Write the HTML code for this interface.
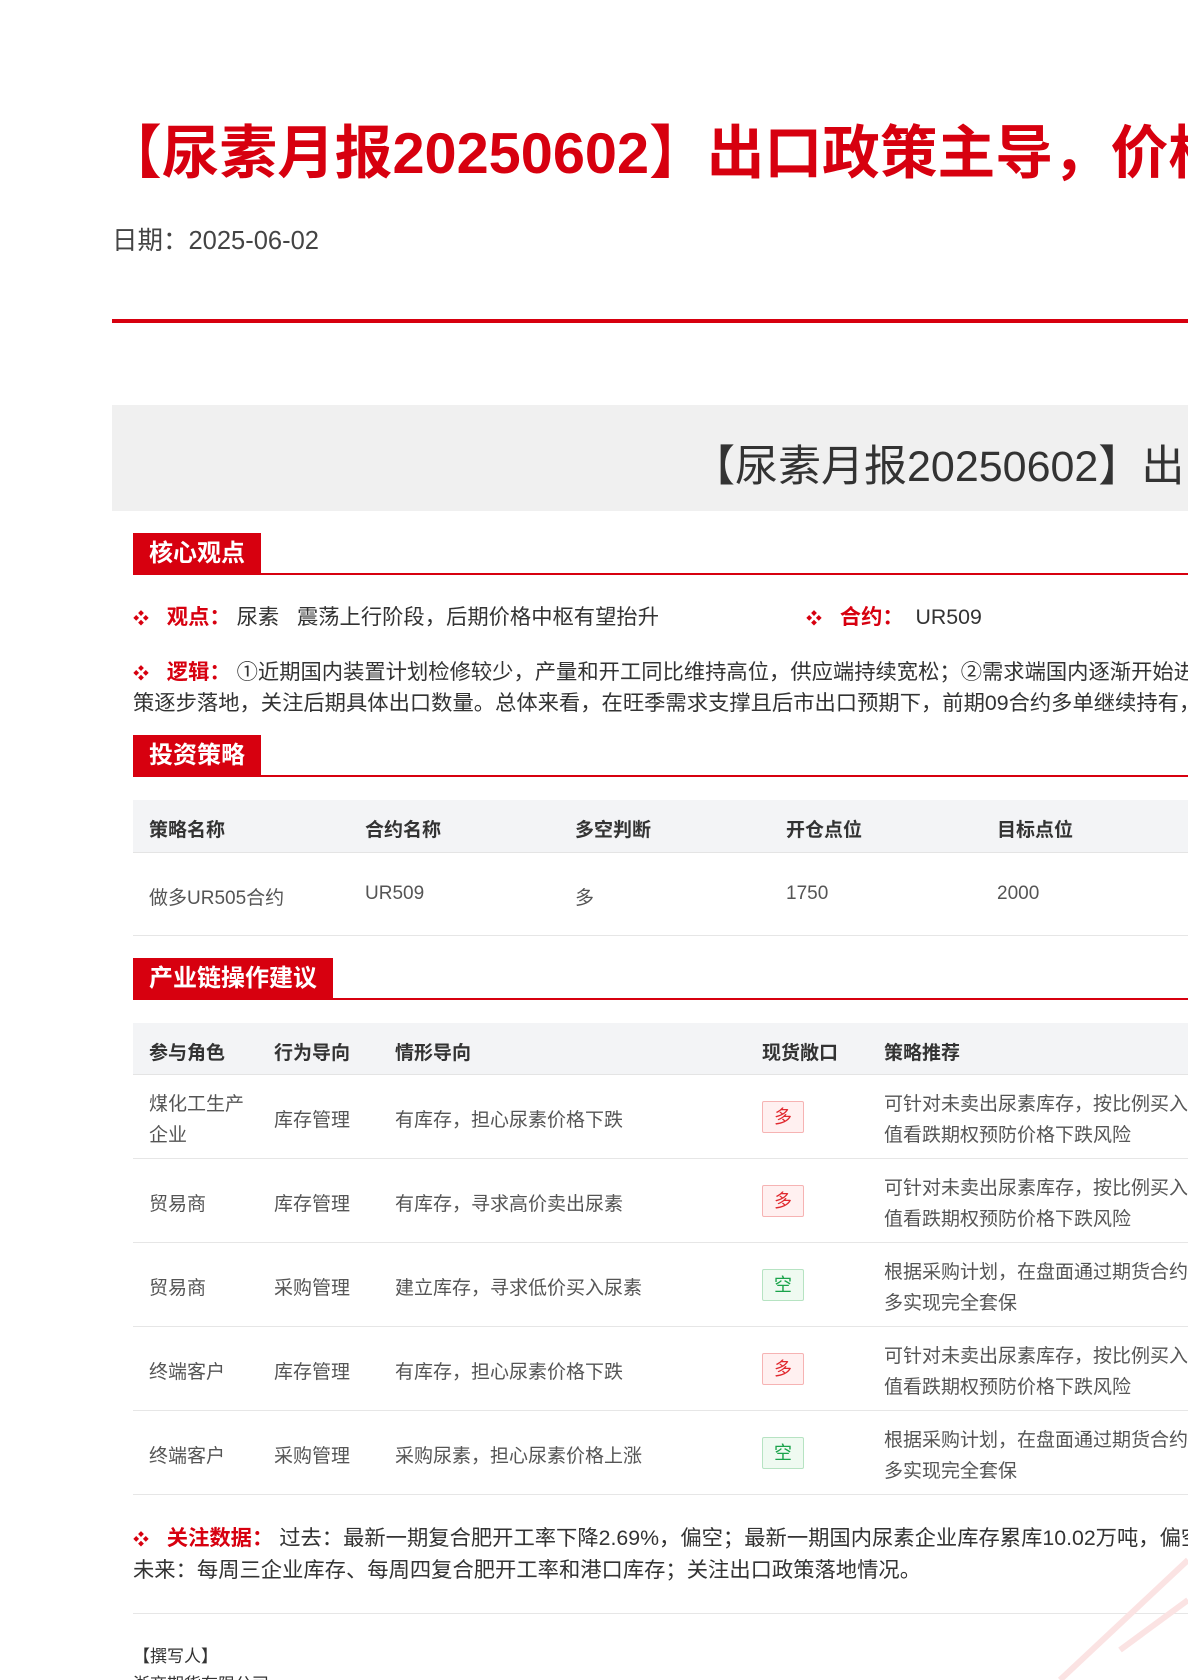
<!DOCTYPE html>
<html><head><meta charset="utf-8">
<style>
html,body{margin:0;padding:0;width:1188px;height:1680px;overflow:hidden;background:#fff;font-family:"Liberation Sans","Noto Sans CJK SC",sans-serif;}
#w{position:relative;width:1188px;height:1680px;overflow:hidden;}
.a{position:absolute;white-space:nowrap;}
.sec{position:absolute;left:133px;background:#d7000f;color:#fff;font-size:24px;font-weight:bold;height:42px;line-height:42px;padding:0 16px;}
.secl{position:absolute;left:133px;right:0;height:2px;background:#d7000f;}
.th{position:absolute;left:133px;right:0;background:#f3f4f6;border-bottom:1px solid #e4e4e4;}
.row{position:absolute;left:133px;right:0;border-bottom:1px solid #e6e6e6;}
.hd{font-size:19px;font-weight:bold;color:#333;}
.td{font-size:19px;color:#555;}
.b{position:absolute;width:40px;height:30px;line-height:30px;text-align:center;font-size:18px;border-radius:2px;}
.up{color:#e0282e;background:#fff0f0;border:1px solid #f6b3b3;}
.dn{color:#1aa34a;background:#effaf1;border:1px solid #b6e3c2;}
.bul{color:#d7000f;font-size:16px;}
.red{color:#d7000f;font-weight:bold;}
.t{font-size:21.3px;color:#333;}
</style></head><body><div id="w">
<div class="a" style="left:104px;top:106px;font-size:57.7px;font-weight:bold;color:#d7000f;">【尿素月报20250602】出口政策主导，价格震荡上行</div>
<div class="a" style="left:112px;top:220px;font-size:25.5px;color:#444;">日期：2025-06-02</div>
<div class="a" style="left:112px;top:319px;right:0;height:4px;background:#d7000f;"></div>
<div class="a" style="left:112px;top:405px;right:0;height:106px;background:#f0f0f0;"></div>
<div class="a" style="left:692px;top:432px;font-size:43px;color:#333;">【尿素月报20250602】出口政策主导</div>

<div class="sec" style="top:533px;">核心观点</div><div class="secl" style="top:573px;"></div>
<div class="a t" style="left:133px;top:600px;"><span class="bul">❖</span>&nbsp;&nbsp;&nbsp;<span class="red">观点：</span>&nbsp;尿素&nbsp;&nbsp;&nbsp;震荡上行阶段，后期价格中枢有望抬升</div>
<div class="a t" style="left:806px;top:600px;"><span class="bul">❖</span>&nbsp;&nbsp;&nbsp;<span class="red">合约：</span>&nbsp;&nbsp;UR509</div>
<div class="a t" style="left:133px;top:655px;"><span class="bul">❖</span>&nbsp;&nbsp;&nbsp;<span class="red">逻辑：</span>&nbsp;①近期国内装置计划检修较少，产量和开工同比维持高位，供应端持续宽松；②需求端国内逐渐开始进入旺季</div>
<div class="a t" style="left:133px;top:686px;">策逐步落地，关注后期具体出口数量。总体来看，在旺季需求支撑且后市出口预期下，前期09合约多单继续持有，</div>

<div class="sec" style="top:735px;">投资策略</div><div class="secl" style="top:775px;"></div>
<div class="th" style="top:800px;height:52px;"></div>
<div class="a hd" style="left:149px;top:815px;">策略名称</div>
<div class="a hd" style="left:365px;top:815px;">合约名称</div>
<div class="a hd" style="left:575px;top:815px;">多空判断</div>
<div class="a hd" style="left:786px;top:815px;">开仓点位</div>
<div class="a hd" style="left:997px;top:815px;">目标点位</div>
<div class="row" style="top:853px;height:82px;"></div>
<div class="a td" style="left:149px;top:883px;">做多UR505合约</div>
<div class="a td" style="left:365px;top:883px;">UR509</div>
<div class="a td" style="left:575px;top:883px;">多</div>
<div class="a td" style="left:786px;top:883px;">1750</div>
<div class="a td" style="left:997px;top:883px;">2000</div>

<div class="sec" style="top:958px;">产业链操作建议</div><div class="secl" style="top:998px;"></div>
<div class="th" style="top:1023px;height:51px;"></div>
<div class="a hd" style="left:149px;top:1038px;">参与角色</div>
<div class="a hd" style="left:274px;top:1038px;">行为导向</div>
<div class="a hd" style="left:395px;top:1038px;">情形导向</div>
<div class="a hd" style="left:762px;top:1038px;">现货敞口</div>
<div class="a hd" style="left:884px;top:1038px;">策略推荐</div>

<div class="row" style="top:1075px;height:83px;"></div>
<div class="a td" style="left:149px;top:1089px;line-height:31px;">煤化工生产<br>企业</div>
<div class="a td" style="left:274px;top:1105px;">库存管理</div>
<div class="a td" style="left:395px;top:1105px;">有库存，担心尿素价格下跌</div>
<div class="b up" style="left:762px;top:1101px;">多</div>
<div class="a td" style="left:884px;top:1089px;line-height:31px;">可针对未卖出尿素库存，按比例买入虚<br>值看跌期权预防价格下跌风险</div>

<div class="row" style="top:1159px;height:83px;"></div>
<div class="a td" style="left:149px;top:1189px;">贸易商</div>
<div class="a td" style="left:274px;top:1189px;">库存管理</div>
<div class="a td" style="left:395px;top:1189px;">有库存，寻求高价卖出尿素</div>
<div class="b up" style="left:762px;top:1185px;">多</div>
<div class="a td" style="left:884px;top:1173px;line-height:31px;">可针对未卖出尿素库存，按比例买入虚<br>值看跌期权预防价格下跌风险</div>

<div class="row" style="top:1243px;height:83px;"></div>
<div class="a td" style="left:149px;top:1273px;">贸易商</div>
<div class="a td" style="left:274px;top:1273px;">采购管理</div>
<div class="a td" style="left:395px;top:1273px;">建立库存，寻求低价买入尿素</div>
<div class="b dn" style="left:762px;top:1269px;">空</div>
<div class="a td" style="left:884px;top:1257px;line-height:31px;">根据采购计划，在盘面通过期货合约做<br>多实现完全套保</div>

<div class="row" style="top:1327px;height:83px;"></div>
<div class="a td" style="left:149px;top:1357px;">终端客户</div>
<div class="a td" style="left:274px;top:1357px;">库存管理</div>
<div class="a td" style="left:395px;top:1357px;">有库存，担心尿素价格下跌</div>
<div class="b up" style="left:762px;top:1353px;">多</div>
<div class="a td" style="left:884px;top:1341px;line-height:31px;">可针对未卖出尿素库存，按比例买入虚<br>值看跌期权预防价格下跌风险</div>

<div class="row" style="top:1411px;height:83px;"></div>
<div class="a td" style="left:149px;top:1441px;">终端客户</div>
<div class="a td" style="left:274px;top:1441px;">采购管理</div>
<div class="a td" style="left:395px;top:1441px;">采购尿素，担心尿素价格上涨</div>
<div class="b dn" style="left:762px;top:1437px;">空</div>
<div class="a td" style="left:884px;top:1425px;line-height:31px;">根据采购计划，在盘面通过期货合约做<br>多实现完全套保</div>

<div class="a t" style="left:133px;top:1521px;"><span class="bul">❖</span>&nbsp;&nbsp;&nbsp;<span class="red">关注数据：</span>&nbsp;过去：最新一期复合肥开工率下降2.69%，偏空；最新一期国内尿素企业库存累库10.02万吨，偏空</div>
<div class="a t" style="left:133px;top:1553px;">未来：每周三企业库存、每周四复合肥开工率和港口库存；关注出口政策落地情况。</div>
<div class="a" style="left:133px;right:0;top:1613px;height:1px;background:#e6e6e6;"></div>
<div class="a" style="left:133px;top:1642px;font-size:17px;color:#333;">【撰写人】</div>
<div class="a" style="left:133px;top:1670px;font-size:17px;color:#333;">浙商期货有限公司</div>
<svg class="a" style="left:1000px;top:1540px;" width="188" height="140"><g stroke="#fbe3e3" stroke-width="6" fill="none"><path d="M188 20 L60 140"/><path d="M120 110 L188 60"/></g></svg>
</div></body></html>
